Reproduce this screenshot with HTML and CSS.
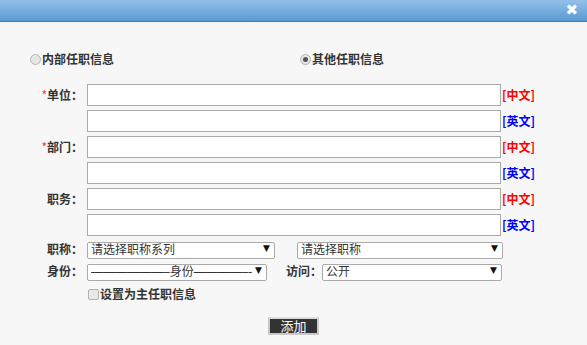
FILE: index.html
```html
<!DOCTYPE html>
<html lang="zh-CN">
<head>
    <meta charset="UTF-8">
    <title>任职信息</title>
    <link rel="stylesheet" href="styles.css">
</head>
<body>

    <div class="titlebar">
        <span class="close">&#10006;</span>
    </div>

    <div class="content">
        <div class="radios">
            <label class="radio"><span class="dot"></span>内部任职信息</label>
            <label class="radio other"><span class="dot on"></span>其他任职信息</label>
        </div>

        <form id="jobForm">
            <div class="row">
                <span class="lbl"><i>*</i>单位：</span>
                <input type="text" class="txt" name="txtUnitCn">
                <span class="tag cn">[中文]</span>
            </div>
            <div class="row">
                <span class="lbl"></span>
                <input type="text" class="txt" name="txtUnitEn">
                <span class="tag en">[英文]</span>
            </div>
            <div class="row">
                <span class="lbl"><i>*</i>部门：</span>
                <input type="text" class="txt" name="txtDeptCn">
                <span class="tag cn">[中文]</span>
            </div>
            <div class="row">
                <span class="lbl"></span>
                <input type="text" class="txt" name="txtDeptEn">
                <span class="tag en">[英文]</span>
            </div>
            <div class="row">
                <span class="lbl">职务：</span>
                <input type="text" class="txt" name="txtPostCn">
                <span class="tag cn">[中文]</span>
            </div>
            <div class="row">
                <span class="lbl"></span>
                <input type="text" class="txt" name="txtPostEn">
                <span class="tag en">[英文]</span>
            </div>

            <div class="row sel">
                <span class="lbl">职称：</span>
                <span class="select s-series"><select name="selSeries"><option>请选择职称系列</option></select></span>
                <span class="select s-title"><select name="selTitle"><option>请选择职称</option></select></span>
            </div>
            <div class="row sel">
                <span class="lbl">身份：</span>
                <span class="select s-identity"><select name="selIdentity"><option>&mdash;&mdash;&mdash;&mdash;&mdash;&mdash;&ndash;身份&mdash;&mdash;&mdash;&mdash;&ndash;-</option></select></span>
                <span class="lbl2">访问：</span>
                <span class="select s-access"><select name="selAccess"><option>公开</option></select></span>
            </div>

            <label class="check"><span class="box"></span>设置为主任职信息</label>

            <div class="actions">
                <button type="button" class="btn">添加</button>
            </div>
        </form>
    </div>

</body>
</html>
```

FILE: styles.css
```css
body {
    margin: 0;
    background-color: #f7f7f7;
    font-family: "Microsoft YaHei", "Noto Sans CJK SC", sans-serif;
    font-size: 12px;
    color: #333;
}
.titlebar {
    height: 21px;
    background: linear-gradient(#93c0e8, #5a99d3);
    border-bottom: 1px solid #3d7cc4;
    position: relative;
}
.close {
    position: absolute;
    right: 9px;
    top: 2px;
    color: #fff;
    font-family: "DejaVu Sans", sans-serif;
    font-size: 15px;
    line-height: 16px;
    font-weight: bold;
}
.content {
    padding-top: 29px;
}
.radios {
    display: flex;
    height: 16px;
    line-height: 16px;
    padding-left: 30px;
    font-weight: bold;
    margin-bottom: 17px;
}
.radio {
    display: flex;
    align-items: center;
}
.radio.other {
    margin-left: 186px;
}
.dot {
    width: 9px;
    height: 9px;
    border: 1px solid #b5b5b5;
    border-radius: 50%;
    background: #e6e6e6;
    margin-right: 1px;
    position: relative;
}
.dot.on::after {
    content: "";
    position: absolute;
    left: 2px;
    top: 2px;
    width: 5px;
    height: 5px;
    border-radius: 50%;
    background: #555;
}
.row {
    display: flex;
    align-items: center;
    height: 22px;
    margin-bottom: 4px;
}
.lbl, .lbl2 {
    font-family: "Microsoft YaHei", "Noto Sans CJK JP", sans-serif;
}
.lbl {
    width: 83px;
    padding-right: 4px;
    text-align: right;
    font-weight: bold;
    line-height: 16px;
    flex-shrink: 0;
    white-space: nowrap;
}
.lbl i {
    font-style: normal;
    color: #f33;
    font-weight: normal;
}
.txt {
    width: 414px;
    height: 22px;
    box-sizing: border-box;
    border: 1px solid #aaa;
    background: #fff;
    margin: 0;
    padding: 0 3px;
}
.tag {
    margin-left: 1px;
    font-weight: bold;
    line-height: 16px;
    white-space: nowrap;
}
.cn {
    color: #f00;
}
.en {
    color: #00f;
}
.row.sel {
    height: 17px;
    margin-bottom: 5px;
}
.select {
    position: relative;
    height: 17px;
}
.select select {
    appearance: none;
    width: 100%;
    height: 17px;
    box-sizing: border-box;
    border: 1px solid #aaa;
    border-radius: 2px;
    background: #fff;
    color: #333;
    font-family: "Liberation Sans", "Microsoft YaHei", "Noto Sans CJK SC", sans-serif;
    font-size: 12px;
    line-height: 15px;
    padding: 0 3px;
    margin: 0;
}
.select::after {
    content: "\25BC";
    position: absolute;
    right: 5px;
    top: 1px;
    font-family: "DejaVu Sans", sans-serif;
    font-size: 9px;
    line-height: 15px;
    color: #111;
    pointer-events: none;
}
.s-series {
    width: 188px;
}
.s-title {
    width: 206px;
    margin-left: 22px;
}
.s-identity {
    width: 180px;
}
.lbl2 {
    margin-left: 19px;
    width: 36px;
    font-weight: bold;
    line-height: 16px;
    white-space: nowrap;
}
.s-access {
    width: 180px;
}
.check {
    display: flex;
    align-items: center;
    margin-left: 88px;
    margin-top: 7px;
    height: 16px;
    line-height: 16px;
    font-weight: bold;
}
.box {
    width: 9px;
    height: 9px;
    border: 1px solid #b0b0b0;
    border-radius: 2px;
    background: #e8e8e8;
    margin-right: 1px;
}
.actions {
    text-align: center;
    margin-top: 15px;
}
.btn {
    width: 51px;
    height: 18px;
    box-sizing: border-box;
    background: #333;
    color: #fff;
    border: 2px solid #c8c8c8;
    border-top-color: #ddd;
    font-family: "Microsoft YaHei", "Noto Sans CJK SC", sans-serif;
    font-size: 13px;
    line-height: 14px;
    padding: 0;
    cursor: pointer;
}
```
